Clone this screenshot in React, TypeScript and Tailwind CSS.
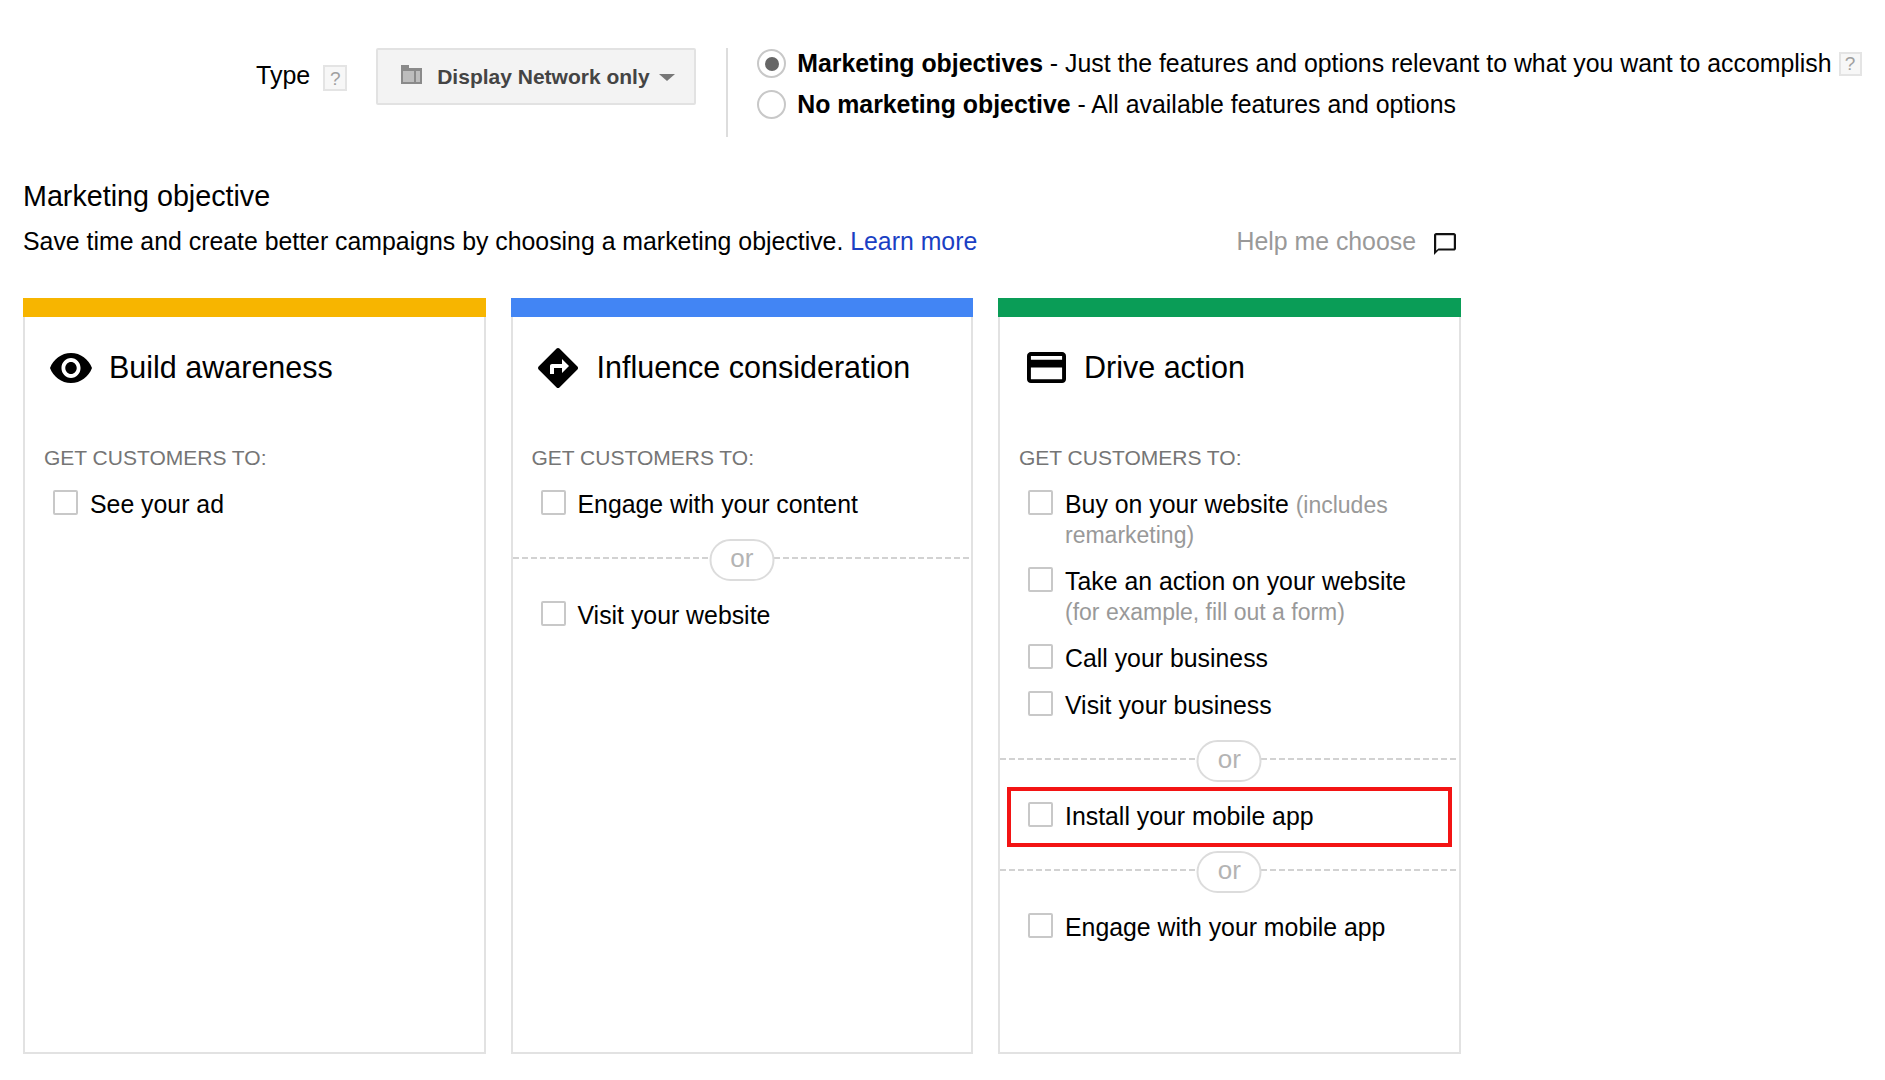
import React from "react";

function HelpBox({ className }: { className: string }) {
  return (
    <span className={`flex items-center justify-center border-2 border-[#e4e4e4] bg-[#f7f7f7] text-[19px] leading-none text-[#a0a0a0] ${className}`}>?</span>
  );
}

function Check({ children }: { children: React.ReactNode }) {
  return (
    <div className="flex items-start pl-[28px]">
      <span className="mr-[12px] h-[25px] w-[25px] shrink-0 rounded-[2px] border-2 border-[#c8c8c8] bg-white" />
      <div className="w-[360px] text-[24.85px] leading-[30px] text-black">{children}</div>
    </div>
  );
}

function Or() {
  return (
    <div className="relative mt-[37px] mb-[42px] h-[2px] bg-[repeating-linear-gradient(90deg,#d2d2d2_0_6px,transparent_6px_9px)]">
      <span className="absolute left-1/2 top-[-18px] flex h-[42px] w-[65px] -translate-x-1/2 items-center justify-center rounded-[21px] border-2 border-[#dcdcdc] bg-white pb-[4px] text-[26px] leading-none text-[#b4b4b4]">or</span>
    </div>
  );
}

function Card({ color, icon, title, iconBox, children }: { color: string; icon: React.ReactNode; title: string; iconBox: string; children: React.ReactNode }) {
  return (
    <div className="flex h-[756px] w-[462.5px] flex-col">
      <div className={`h-[19px] ${color}`} />
      <div className="flex-1 border-x-2 border-b-2 border-[#e2e2e2]">
        <div className="mt-[32px] flex h-[37px] items-center">
          <div className={`flex justify-center ${iconBox}`}>{icon}</div>
          <span className="text-[30.5px] leading-[37px] text-black">{title}</span>
        </div>
        <div className="mt-[60px] mb-[20px] pl-[19px] text-[21px] leading-[24px] text-[#757575]">GET CUSTOMERS TO:</div>
        {children}
      </div>
    </div>
  );
}

const Gray = ({ children }: { children: React.ReactNode }) => <span className="text-[23px] text-[#999999]">{children}</span>;

export default function App() {
  return (
    <div className="h-[1080px] w-[1885px] overflow-hidden bg-white pl-[23px] pt-[48px] font-['Liberation_Sans',Arial,sans-serif] text-black">
      <div className="flex h-[89px] items-start pl-[233px]">
        <div className="flex h-[57px] items-center text-[25px] leading-none">
          <span className="-mt-[2px]">Type</span>
          <HelpBox className="ml-[13px] mt-[3px] h-[26px] w-[24px]" />
        </div>
        <button className="ml-[29px] flex h-[57px] w-[320px] items-center rounded-[2px] border-2 border-[#e2e2e2] bg-[#f3f3f3] pl-[22px] text-[21px] font-bold text-[#444444]">
          <svg width="23" height="21" viewBox="0 0 23 21" className="-mt-[5px] mr-[14px]">
            <path d="M1 1h8v3h13v16H1z" fill="#8a8a8a" />
            <path d="M3 7h11v11H3z" fill="#bdbdbd" />
            <path d="M16 7h4v11h-4z" fill="#bdbdbd" />
          </svg>
          Display Network only
          <span className="ml-[9px] mt-[2px] h-0 w-0 border-x-[8px] border-t-[7px] border-x-transparent border-t-[#777777]" />
        </button>
        <div className="ml-[30px] h-[89px] w-[2px] bg-[#dddddd]" />
        <div className="ml-[29px] flex flex-col gap-[12px] pt-px text-[24.85px] leading-[29px]">
          <div className="flex items-center">
            <span className="mr-[11px] flex h-[29px] w-[29px] items-center justify-center rounded-full border-2 border-[#c8c8c8] bg-white">
              <span className="h-[14px] w-[14px] rounded-full bg-[#666666]" />
            </span>
            <span className="whitespace-nowrap"><b>Marketing objectives</b> - Just the features and options relevant to what you want to accomplish</span>
            <HelpBox className="ml-[7px] h-[24px] w-[23px]" />
          </div>
          <div className="flex items-center">
            <span className="mr-[11px] h-[29px] w-[29px] rounded-full border-2 border-[#c8c8c8] bg-white" />
            <span><b>No marketing objective</b> - All available features and options</span>
          </div>
        </div>
      </div>

      <div className="mt-[43px] text-[28.7px] leading-[32px]">Marketing objective</div>
      <div className="mt-[15px] flex h-[29px] w-[1438px] items-center text-[24.85px] leading-[29px]">
        <span>Save time and create better campaigns by choosing a marketing objective. <span className="text-[#1a3fc4]">Learn more</span></span>
        <span className="ml-auto text-[#999999]">Help me choose</span>
        <svg width="22" height="22" viewBox="2 2 20 20" className="ml-[18px] mr-[5px] mt-[5px]">
          <path d="M20 2H4c-1.1 0-2 .9-2 2v18l4-4h14c1.1 0 2-.9 2-2V4c0-1.1-.9-2-2-2zm0 14H6l-2 2V4h16v12z" fill="#111111" />
        </svg>
      </div>

      <div className="mt-[42px] flex gap-[25px]">
        <Card
          color="bg-[#f7b500]"
          title="Build awareness"
          iconBox="w-[84px] pl-[7px]"
          icon={
            <svg width="42" height="30" viewBox="1 4.5 22 15" preserveAspectRatio="none">
              <path d="M12 4.5C7 4.5 2.73 7.61 1 12c1.73 4.39 6 7.5 11 7.5s9.27-3.11 11-7.5c-1.73-4.39-6-7.5-11-7.5zM12 17c-2.76 0-5-2.24-5-5s2.24-5 5-5 5 2.24 5 5-2.24 5-5 5zm0-8c-1.66 0-3 1.34-3 3s1.34 3 3 3 3-1.34 3-3-1.34-3-3-3z" fill="#000000" />
            </svg>
          }
        >
          <Check>See your ad</Check>
        </Card>
        <Card
          color="bg-[#4285f4]"
          title="Influence consideration"
          iconBox="w-[84px] pl-[6px]"
          icon={
            <svg width="40" height="40" viewBox="2 2 20 20">
              <path d="M21.71 11.29l-9-9c-.39-.39-1.02-.39-1.41 0l-9 9c-.39.39-.39 1.02 0 1.41l9 9c.39.39 1.02.39 1.41 0l9-9c.39-.38.39-1.01 0-1.41zM14 14.5V12h-4v3H8v-4c0-.55.45-1 1-1h5V7.5l3.5 3.5-3.5 3.5z" fill="#000000" />
            </svg>
          }
        >
          <Check>Engage with your content</Check>
          <Or />
          <Check>Visit your website</Check>
        </Card>
        <Card
          color="bg-[#0a9d57]"
          title="Drive action"
          iconBox="w-[84px] pl-[9px]"
          icon={
            <svg width="39" height="31" viewBox="2 4 20 16" preserveAspectRatio="none">
              <path d="M20 4H4c-1.11 0-1.99.89-1.99 2L2 18c0 1.11.89 2 2 2h16c1.11 0 2-.89 2-2V6c0-1.11-.89-2-2-2zm0 14H4v-6h16v6zm0-10H4V6h16v2z" fill="#000000" />
            </svg>
          }
        >
          <div className="flex flex-col gap-[17px]">
            <Check>
              <div>Buy on your website <Gray>(includes</Gray></div>
              <div><Gray>remarketing)</Gray></div>
            </Check>
            <Check>
              <div>Take an action on your website</div>
              <div><Gray>(for example, fill out a form)</Gray></div>
            </Check>
            <Check>Call your business</Check>
            <Check>Visit your business</Check>
          </div>
          <Or />
          <div className="relative">
            <Check>Install your mobile app</Check>
            <div className="absolute bottom-[-15px] left-[7px] right-[7px] top-[-15px] border-4 border-[#f31414]" />
          </div>
          <Or />
          <Check>Engage with your mobile app</Check>
        </Card>
      </div>
    </div>
  );
}
